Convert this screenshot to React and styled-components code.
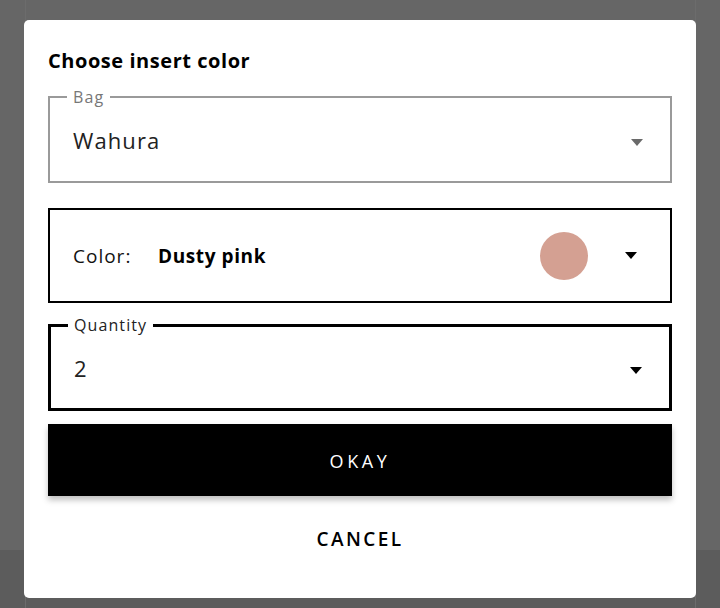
import React from 'react';
import styled, { createGlobalStyle } from 'styled-components';

const GlobalStyle = createGlobalStyle`
  html, body {
    margin: 0;
    padding: 0;
    height: 100%;
  }
  body {
    font-family: "Open Sans", "Liberation Sans", sans-serif;
    background: #666;
  }
`

const Backdrop = styled.div`
  width: 720px;
  height: 608px;
  position: relative;
  overflow: hidden;
  background: linear-gradient(to bottom, #666 0, #666 550px, #5c5c5c 550px);
`

const PagePanel = styled.div`
  position: absolute;
  top: 0;
  bottom: 0;
  left: 25px;
  right: 24px;
  border-left: 1px solid #6c6c6c;
  border-right: 1px solid #6c6c6c;
`

const Dialog = styled.div`
  position: absolute;
  left: 24px;
  top: 20px;
  width: 672px;
  height: 578px;
  box-sizing: border-box;
  background: #fff;
  border-radius: 5px;
  padding: 29px 24px 0 24px;
  display: flex;
  flex-direction: column;
`

const Title = styled.h2`
  margin: 0 0 17px 0;
  font-size: 20px;
  line-height: 24px;
  font-weight: 700;
  letter-spacing: 0.55px;
  color: #000;
`

const Field = styled.fieldset`
  margin: ${p => p.$top}px 0 0 0;
  padding: 0;
  min-width: 0;
  border: ${p => p.$weight}px solid ${p => p.$color};
`

const Legend = styled.legend`
  margin-left: 17px;
  padding: 0 6px 0 6px;
  font-size: 16px;
  line-height: 14px;
  letter-spacing: 1.1px;
  color: ${p => p.$color};
`

const Row = styled.div`
  height: ${p => p.$height}px;
  display: flex;
  align-items: center;
  justify-content: space-between;
  padding: 0 27px 0 23px;
`

const Value = styled.span`
  font-size: 22px;
  line-height: 28px;
  color: #222;
  letter-spacing: 1.1px;
  margin-top: ${p => p.$shift}px;
`

const Arrow = styled.span`
  width: 0;
  height: 0;
  border-left: 6px solid transparent;
  border-right: 6px solid transparent;
  border-top: 7px solid ${p => p.$color};
`

const ColorBox = styled.div`
  margin-top: 25px;
  height: 95px;
  box-sizing: border-box;
  border: 2px solid #000;
  display: flex;
  align-items: center;
  padding: 0 33px 0 23px;
`

const ColorLabel = styled.span`
  font-size: 19px;
  color: #111;
  width: 85px;
  letter-spacing: 1px;
`

const ColorName = styled.span`
  font-size: 19px;
  font-weight: 700;
  letter-spacing: 0.6px;
  color: #000;
  flex: 1;
`

const Swatch = styled.span`
  width: 48px;
  height: 48px;
  border-radius: 50%;
  background: ${p => p.$color};
  margin-right: 37px;
`

const OkButton = styled.button`
  margin-top: 13px;
  height: 72px;
  border: none;
  background: #000;
  color: #fff;
  font-family: "Open Sans", "Liberation Sans", sans-serif;
  font-size: 18px;
  letter-spacing: 3.6px;
  padding-top: 2px;
  box-shadow: 0 4px 6px rgba(0, 0, 0, 0.25);
  cursor: pointer;
`

const CancelButton = styled.button`
  margin-top: 14px;
  height: 57px;
  border: none;
  background: transparent;
  color: #000;
  font-family: "Open Sans", "Liberation Sans", sans-serif;
  font-size: 19px;
  font-weight: 600;
  letter-spacing: 2.4px;
  cursor: pointer;
`

export default function App() {
  return (
    <Backdrop>
      <GlobalStyle />
      <PagePanel />
      <Dialog>
        <Title>Choose insert color</Title>
        <Field $weight={2} $color="#9a9a9a" $top={0}>
          <Legend $color="#777">Bag</Legend>
          <Row $height={77}>
            <Value $shift={-5}>Wahura</Value>
            <Arrow $color="#6a6a6a" />
          </Row>
        </Field>
        <ColorBox>
          <ColorLabel>Color:</ColorLabel>
          <ColorName>Dusty pink</ColorName>
          <Swatch $color="#d4a092" />
          <Arrow $color="#000" />
        </ColorBox>
        <Field $weight={3} $color="#000" $top={15}>
          <Legend $color="#222">Quantity</Legend>
          <Row $height={76}>
            <Value $shift={-4}>2</Value>
            <Arrow $color="#000" />
          </Row>
        </Field>
        <OkButton>OKAY</OkButton>
        <CancelButton>CANCEL</CancelButton>
      </Dialog>
    </Backdrop>
  );
}
